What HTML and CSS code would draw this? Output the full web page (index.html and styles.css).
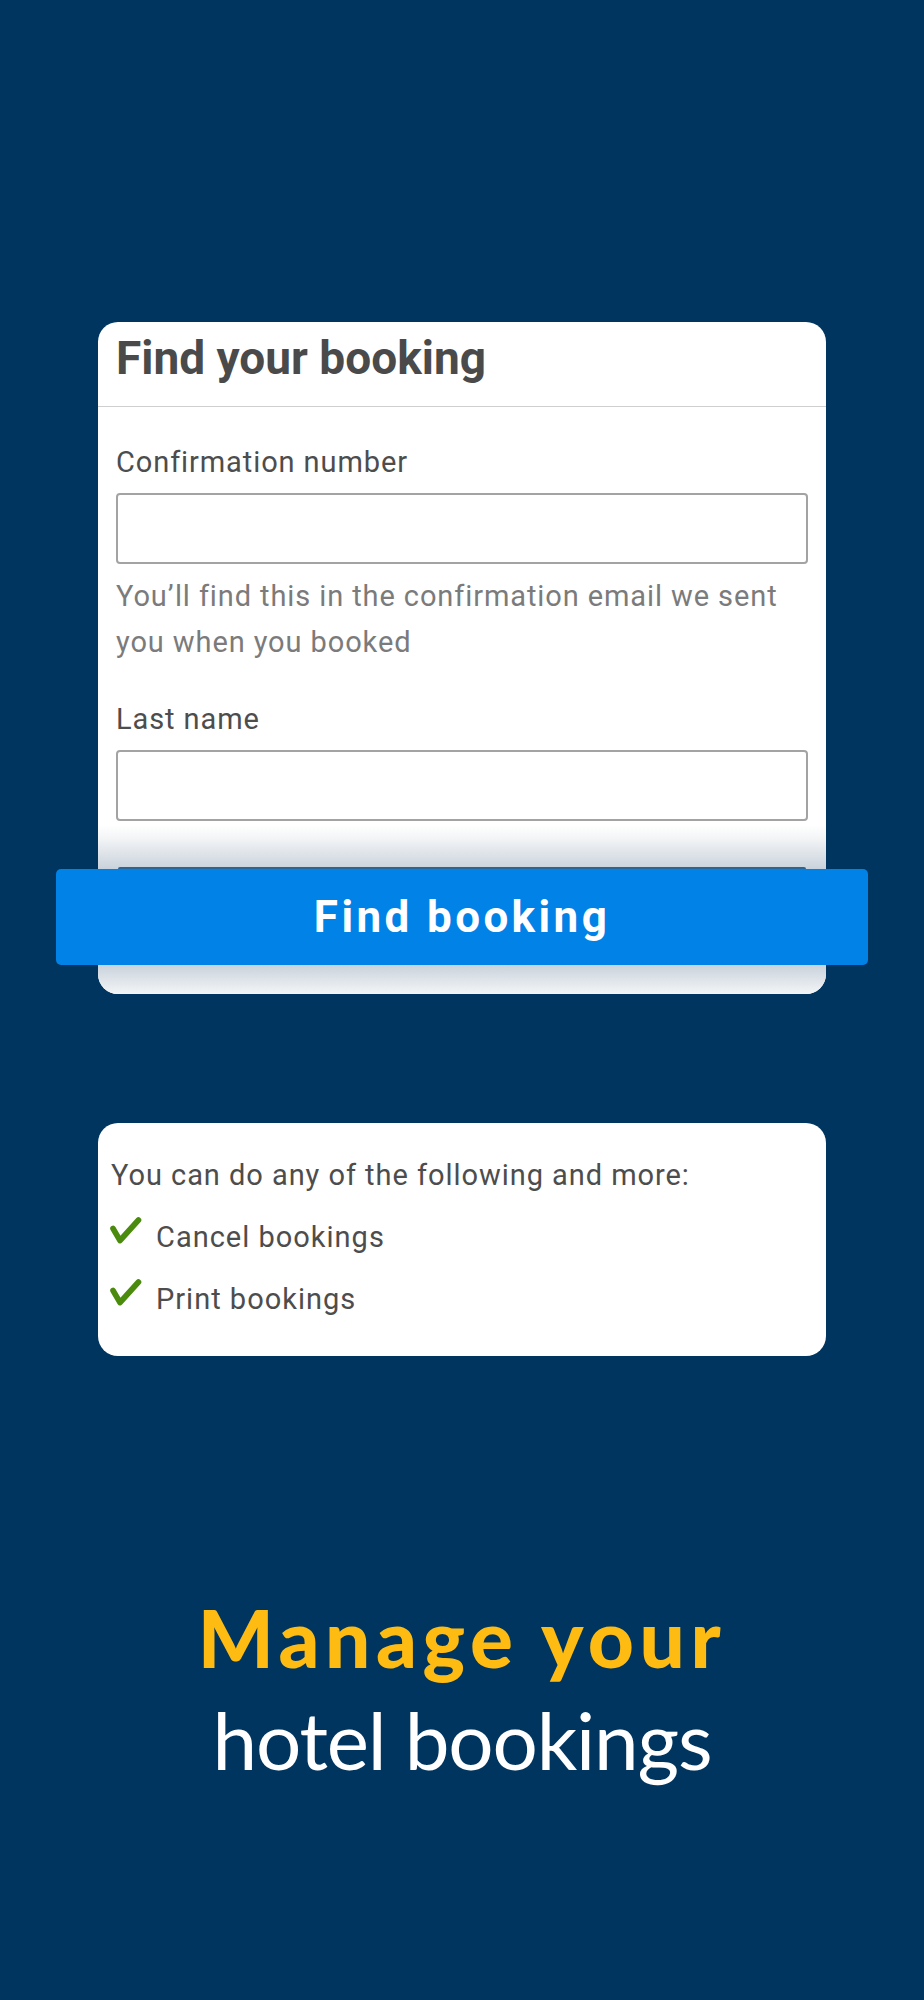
FILE: index.html
```html
<!DOCTYPE html>
<html lang="en">
<head>
<meta charset="utf-8">
<title>Manage your hotel bookings</title>
<link rel="stylesheet" href="styles.css">
</head>
<body>
<main class="page">
  <section class="card find-card">
    <header class="card-header">
      <h1 class="card-title">Find your booking</h1>
    </header>
    <div class="card-body">
      <label class="field-label" for="conf">Confirmation number</label>
      <input class="field-input" id="conf" type="text">
      <p class="field-hint">You’ll find this in the confirmation email we sent you when you booked</p>
      <label class="field-label field-label-gap" for="lname">Last name</label>
      <input class="field-input" id="lname" type="text">
    </div>
    <div class="card-footer">
      <div class="ghost-edge"></div>
      <button class="find-btn" type="button">Find booking</button>
    </div>
  </section>

  <section class="card info-card">
    <p class="info-intro">You can do any of the following and more:</p>
    <ul class="info-list">
      <li class="info-item">
        <svg class="check" viewBox="0 0 34 30" width="34" height="30" aria-hidden="true"><path d="M5 12.5 L12 24.5 L30.5 4" fill="none" stroke="#4a8a0c" stroke-width="5.6" stroke-linecap="round" stroke-linejoin="round"/></svg>
        <span>Cancel bookings</span>
      </li>
      <li class="info-item">
        <svg class="check" viewBox="0 0 34 30" width="34" height="30" aria-hidden="true"><path d="M5 12.5 L12 24.5 L30.5 4" fill="none" stroke="#4a8a0c" stroke-width="5.6" stroke-linecap="round" stroke-linejoin="round"/></svg>
        <span>Print bookings</span>
      </li>
    </ul>
  </section>

  <h2 class="hero">
    <span class="hero-top">Manage your</span>
    <span class="hero-bottom">hotel bookings</span>
  </h2>
</main>
</body>
</html>
```

FILE: styles.css
```css
* { box-sizing: border-box; }

html, body {
  margin: 0;
  padding: 0;
  background: #00355f;
}

body {
  font-family: Roboto, "Liberation Sans", Arial, sans-serif;
  min-height: 2000px;
}

.page {
  display: flex;
  flex-direction: column;
  align-items: center;
  padding-top: 322px;
}

.card {
  width: 728px;
  background: #ffffff;
  border-radius: 20px;
}

.find-card {
  display: flex;
  flex-direction: column;
}

.card-header {
  padding: 8px 18px 20px;
  border-bottom: 1px solid #cfcfcf;
}

.card-title {
  margin: 0;
  font-size: 46px;
  line-height: 56px;
  font-weight: 700;
  color: #4a4a4a;
}

.card-body {
  display: flex;
  flex-direction: column;
  padding: 35px 18px 4px;
}

.field-label {
  font-size: 29px;
  line-height: 40px;
  letter-spacing: 0.9px;
  color: #4d4d4d;
  margin-bottom: 11px;
}

.field-label-gap {
  margin-top: 34px;
}

.field-input {
  display: block;
  width: 100%;
  height: 71px;
  border: 2px solid #a3a3a3;
  border-radius: 4px;
  background: #fff;
  font: inherit;
  font-size: 29px;
  padding: 0 14px;
}

.field-hint {
  margin: 9px 0 0;
  font-size: 29px;
  line-height: 46px;
  letter-spacing: 0.9px;
  color: #7b7b7b;
}

.card-footer {
  display: flex;
  flex-direction: column;
  padding-top: 42px;
  padding-bottom: 29px;
  border-radius: 0 0 20px 20px;
  background: linear-gradient(to bottom, #ffffff 0px, #f2f4f6 14px, #c9d2db 44px, #c9d2db 140px, #f3f5f7 169px);
}

.ghost-edge {
  height: 2px;
  margin: 0 20px;
  background: #2c6492;
  border-radius: 2px 2px 0 0;
}

.find-btn {
  margin: 0 -42px;
  height: 96px;
  border: none;
  border-radius: 5px;
  background: #0082e6;
  color: #ffffff;
  font-family: Roboto, "Liberation Sans", Arial, sans-serif;
  font-size: 44px;
  font-weight: 700;
  letter-spacing: 3.4px;
  padding: 0;
}

.info-card {
  margin-top: 129px;
  padding: 32px 13px 37px;
}

.info-intro {
  margin: 0;
  font-size: 29px;
  line-height: 40px;
  letter-spacing: 0.95px;
  color: #4d4d4d;
}

.info-list {
  list-style: none;
  margin: 22px 0 0;
  padding: 0;
  display: flex;
  flex-direction: column;
  gap: 22px;
}

.info-item {
  display: flex;
  align-items: flex-start;
  gap: 14px;
  font-size: 29px;
  line-height: 40px;
  letter-spacing: 1px;
  color: #4d4d4d;
}

.check {
  flex: none;
  margin-top: -1px;
  margin-left: -3px;
}

.hero {
  margin: 230px 0 0;
  display: flex;
  flex-direction: column;
  align-items: center;
  font-family: Lato, "Open Sans", sans-serif;
  font-size: 80px;
  line-height: 102px;
  text-align: center;
}

.hero-top {
  color: #febb12;
  font-weight: 900;
  letter-spacing: 5.6px;
}

.hero-bottom {
  color: #ffffff;
  font-weight: 400;
  letter-spacing: -1.2px;
}
```
